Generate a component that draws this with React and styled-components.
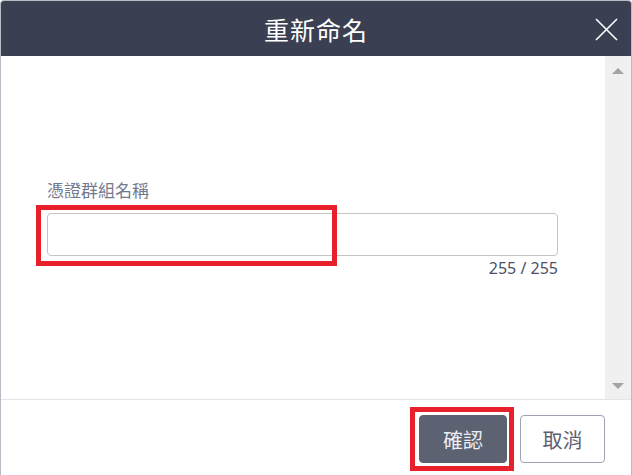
import styled, { createGlobalStyle } from "styled-components";

const GlobalStyle = createGlobalStyle`
  html, body {
    margin: 0;
    padding: 0;
    background: #ffffff;
  }
  body {
    font-family: "Noto Sans", "Noto Sans CJK TC", sans-serif;
  }
`;

const Dialog = styled.section`
  width: 632px;
  box-sizing: border-box;
  border: 1px solid #b9bcc4;
  border-bottom: none;
  border-radius: 4px 4px 0 0;
  background: #ffffff;
  overflow: hidden;
`;

const Header = styled.header`
  height: 55px;
  background: #3a3f51;
  display: flex;
  align-items: center;
  justify-content: center;
  position: relative;
`;

const Title = styled.h2`
  margin: 0;
  font-family: "Noto Sans CJK TC", sans-serif;
  font-size: 25px;
  font-weight: 400;
  color: #ffffff;
  letter-spacing: 1px;
`;

const CloseButton = styled.button`
  position: absolute;
  right: 13px;
  top: 16px;
  width: 24px;
  height: 24px;
  padding: 0;
  border: none;
  background: transparent;
  display: flex;
  align-items: center;
  justify-content: center;
  cursor: pointer;
`;

const Body = styled.div`
  height: 343px;
  display: flex;
`;

const Content = styled.div`
  flex: 1;
  padding: 124px 47px 0 46px;
  display: flex;
  flex-direction: column;
`;

const Label = styled.label`
  font-family: "Noto Sans CJK TC", sans-serif;
  font-size: 17px;
  line-height: 20px;
  color: #747a8e;
  margin-bottom: 13px;
`;

const Field = styled.div`
  position: relative;
`;

const Input = styled.input`
  display: block;
  width: 100%;
  height: 43px;
  box-sizing: border-box;
  border: 1px solid #c4c4c4;
  border-radius: 4px;
  padding: 0 12px;
  font-size: 16px;
  outline: none;
`;

const Highlight = styled.span`
  position: absolute;
  left: -11px;
  top: -8px;
  width: 301px;
  height: 61px;
  box-sizing: border-box;
  border: 5px solid #e8202b;
  pointer-events: none;
`;

const Counter = styled.div`
  align-self: flex-end;
  margin-top: 3px;
  font-size: 16px;
  line-height: 18px;
  color: #4b5068;
`;

const Scrollbar = styled.div`
  width: 26px;
  background: #f0f0f0;
  display: flex;
  flex-direction: column;
  justify-content: space-between;
  align-items: center;
  padding: 12px 0 10px;
`;

const Arrow = styled.span`
  width: 0;
  height: 0;
  border-left: 6px solid transparent;
  border-right: 6px solid transparent;
  ${({ $down }) =>
    $down
      ? "border-top: 6px solid #a3a3a3;"
      : "border-bottom: 6px solid #a3a3a3;"}
`;

const Footer = styled.footer`
  border-top: 1px solid #e3e5ec;
  display: flex;
  align-items: center;
  justify-content: flex-end;
  gap: 6px;
  padding: 7px 26px 8px 0;
`;

const Marked = styled.span`
  display: inline-flex;
  padding: 3px 2px 3px 4px;
  border: 5px solid #e8202b;
`;

const Button = styled.button`
  height: 48px;
  padding: 0;
  box-sizing: border-box;
  border-radius: 4px;
  font-family: "Noto Sans CJK TC", sans-serif;
  font-size: 20px;
  cursor: pointer;
  width: ${({ $primary }) => ($primary ? "88px" : "85px")};
  background: ${({ $primary }) => ($primary ? "#5c6272" : "#ffffff")};
  color: ${({ $primary }) => ($primary ? "#eceef2" : "#5b6072")};
  border: 1px solid ${({ $primary }) => ($primary ? "#5c6272" : "#9ea3b3")};
`;

export default function App() {
  return (
    <>
      <GlobalStyle />
      <Dialog>
        <Header>
          <Title>重新命名</Title>
          <CloseButton aria-label="close">
            <svg width="23" height="23" viewBox="0 0 23 23">
              <path
                d="M1 1 L22 22 M22 1 L1 22"
                stroke="#ffffff"
                strokeWidth="1.6"
                fill="none"
              />
            </svg>
          </CloseButton>
        </Header>
        <Body>
          <Content>
            <Label htmlFor="group-name">憑證群組名稱</Label>
            <Field>
              <Input id="group-name" />
              <Highlight />
            </Field>
            <Counter>255 / 255</Counter>
          </Content>
          <Scrollbar>
            <Arrow />
            <Arrow $down />
          </Scrollbar>
        </Body>
        <Footer>
          <Marked>
            <Button $primary>確認</Button>
          </Marked>
          <Button>取消</Button>
        </Footer>
      </Dialog>
    </>
  );
}
